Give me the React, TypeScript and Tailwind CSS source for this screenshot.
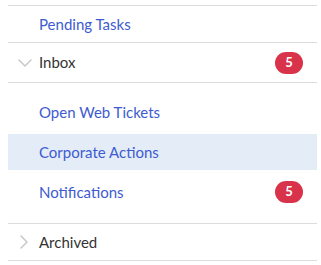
import { ChevronDown, ChevronRight } from 'lucide-react';

const font = { fontFamily: 'Lato, "Open Sans", sans-serif' };

function Badge({ count }: { count: number }) {
  return (
    <span className="ml-auto mr-[14px] flex h-[22px] w-[28px] items-center justify-center rounded-full bg-[#d8334a] text-[13px] font-bold text-white">
      {count}
    </span>
  );
}

export default function App() {
  return (
    <div className="h-[265px] w-[321px] bg-white pt-[5px] pl-[8px] pr-[4px]" style={font}>
      <div className="border-t border-[#dcdcdc]">
        <div className="flex h-[37px] items-center border-b border-[#dcdcdc] pl-[31px] text-[15px] text-[#3e5bd0]">
          Pending Tasks
        </div>

        <div className="flex h-[40px] items-center border-b border-[#dcdcdc]">
          <ChevronDown className="ml-[5px] h-[24px] w-[24px] text-[#c8c8c8]" strokeWidth={1.5} />
          <span className="ml-[2px] text-[15px] text-[#333]">Inbox</span>
          <Badge count={5} />
        </div>

        <div className="flex flex-col gap-[4px] pt-[11px] pb-[13px]">
          <div className="flex h-[36px] items-center pl-[31px] text-[15px] text-[#3e5bd0]">
            Open Web Tickets
          </div>
          <div className="flex h-[36px] items-center bg-[#e3ecf7] pl-[31px] text-[15px] text-[#3e5bd0]">
            Corporate Actions
          </div>
          <div className="flex h-[36px] items-center pl-[31px] text-[15px] text-[#3e5bd0]">
            Notifications
            <Badge count={5} />
          </div>
        </div>

        <div className="flex h-[38px] items-center border-y border-[#dcdcdc]">
          <ChevronRight className="ml-[4px] h-[24px] w-[24px] text-[#c8c8c8]" strokeWidth={1.5} />
          <span className="ml-[3px] text-[15px] text-[#333]">Archived</span>
        </div>
      </div>
    </div>
  );
}
